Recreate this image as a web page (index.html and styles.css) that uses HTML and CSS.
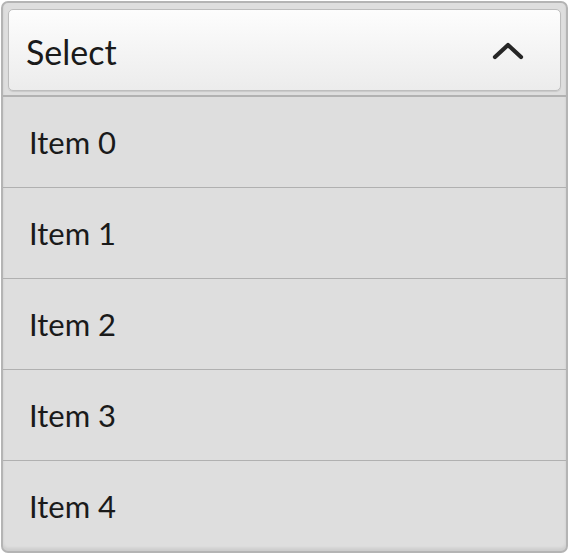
FILE: index.html
```html
<!DOCTYPE html>
<html lang="en">
<head>
    <meta charset="UTF-8">
    <title>Select</title>
    <link rel="stylesheet" href="styles.css">
</head>
<body>

<div class="dropdown">
    <!-- Header button -->
    <div class="dropdown-header">
        <span class="dropdown-title">Select</span>
        <svg class="chevron" width="32" height="20" viewBox="0 0 32 20">
            <path d="M3 16 L16 4 L29 16" fill="none" stroke="#262626" stroke-width="4.2" stroke-linecap="round" stroke-linejoin="round"/>
        </svg>
    </div>

    <!-- Options -->
    <ul class="dropdown-list">
        <li>Item 0</li>
        <li>Item 1</li>
        <li>Item 2</li>
        <li>Item 3</li>
        <li>Item 4</li>
    </ul>
</div>

</body>
</html>
```

FILE: styles.css
```css
body {
    margin: 0;
    padding: 1px;
    font-family: Lato, "Open Sans", sans-serif;
    background-color: #ffffff;
}
.dropdown {
    width: 563px;
    height: 548px;
    border: 2px solid #b4b4b4;
    border-radius: 7px;
    background-color: #dedede;
    box-shadow: inset 0 -3px 3px rgba(0, 0, 0, 0.08);
    display: flex;
    flex-direction: column;
    overflow: hidden;
}
.dropdown-header {
    margin: 6px 5px 0 5px;
    height: 83px;
    border: 1px solid #bdbdbd;
    border-radius: 5px;
    background: linear-gradient(#fdfdfd, #ececec);
    display: flex;
    align-items: center;
    justify-content: space-between;
    padding: 3px 36px 0 17px;
    box-sizing: border-box;
    height: 85px;
    box-shadow: 0 1px 1px rgba(0, 0, 0, 0.1);
}
.dropdown-title {
    font-size: 34px;
    color: #1a1a1a;
}
.chevron {
    margin-top: -2px;
}
.dropdown-list {
    list-style: none;
    margin: 4px 0 0 0;
    padding: 0;
    border-top: 2px solid #b2b2b2;
}
.dropdown-list li {
    height: 90px;
    display: flex;
    align-items: center;
    padding-left: 26px;
    font-size: 31px;
    color: #1a1a1a;
    border-bottom: 1px solid #b0b0b0;
}
.dropdown-list li:last-child {
    border-bottom: none;
}
```
